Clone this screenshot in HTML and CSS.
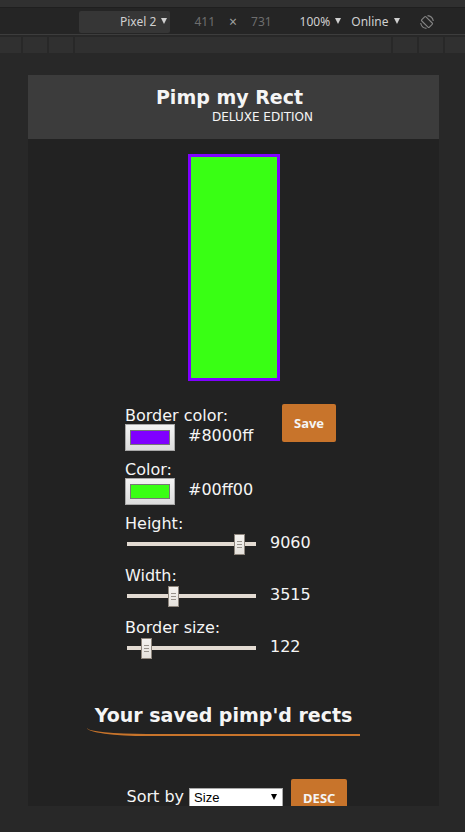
FILE: index.html
```html
<!DOCTYPE html>
<html lang="en">
<head>
<meta charset="utf-8">
<title>Pimp my Rect</title>
<link rel="stylesheet" href="styles.css">
</head>
<body>
<div class="strip"></div>
<nav class="toolbar" aria-label="Device toolbar">
  <button class="device" type="button">Pixel 2 <span class="caret"></span></button>
  <span class="dims"><span>411</span><span class="times">×</span><span>731</span></span>
  <button class="tool zoom" type="button">100% <span class="caret"></span></button>
  <button class="tool" type="button">Online <span class="caret"></span></button>
  <button class="rotate" type="button" aria-label="Rotate">
    <svg width="14" height="14" viewBox="0 0 14 14" fill="none" stroke="currentColor" stroke-width="1.1">
      <path d="M1.8 4.6 4.6 1.8a1 1 0 0 1 1.4 0L12.2 8a1 1 0 0 1 0 1.4L9.4 12.2a1 1 0 0 1-1.4 0L1.8 6a1 1 0 0 1 0-1.4Z"/>
      <path d="M.7 8A6.4 6.4 0 0 0 6.5 13.4M13.3 6A6.4 6.4 0 0 0 7.5 .6"/>
    </svg>
  </button>
</nav>
<div class="ruler"><i></i><i></i><i></i><i class="wide"></i><i></i><i></i><i></i></div>
<main class="screen">
  <header class="banner">
    <h1>Pimp my Rect</h1>
    <p>DELUXE EDITION</p>
  </header>
  <div class="rect"></div>
  <form class="editor">
    <div class="fields">
      <div class="field">
        <label for="border-color">Border color:</label>
        <div class="pick"><input id="border-color" type="color" value="#8000ff"><output>#8000ff</output></div>
      </div>
      <div class="field">
        <label for="color">Color:</label>
        <div class="pick"><input id="color" type="color" value="#39ff14"><output>#00ff00</output></div>
      </div>
      <div class="field">
        <label for="height">Height:</label>
        <div class="slide"><input id="height" type="range" min="0" max="10000" value="9060"><output>9060</output></div>
      </div>
      <div class="field">
        <label for="width">Width:</label>
        <div class="slide"><input id="width" type="range" min="0" max="10000" value="3515"><output>3515</output></div>
      </div>
      <div class="field">
        <label for="border-size">Border size:</label>
        <div class="slide"><input id="border-size" type="range" min="0" max="1000" value="122"><output>122</output></div>
      </div>
    </div>
    <button class="button" type="button">Save</button>
  </form>
  <section class="saved">
    <h2>Your saved pimp'd rects</h2>
    <div class="sort">
      <label for="sort">Sort by</label>
      <span class="select"><select id="sort"><option>Size</option></select><span class="caret"></span></span>
      <button class="button" type="button">DESC</button>
    </div>
  </section>
</main>
</body>
</html>
```
FILE: styles.css
```css
* { box-sizing: border-box; }

body {
  margin: 0;
  height: 100vh;
  display: flex;
  flex-direction: column;
  overflow: hidden;
  background: #282828;
  color: #f5f5f5;
  font: 16px/20px "DejaVu Sans", sans-serif;
}

h1, h2, p { margin: 0; }

button { border: 0; margin: 0; padding: 0; background: none; color: inherit; font: inherit; }

.strip { flex: none; height: 8px; background: #303030; border-bottom: 1px solid #1f1f1f; }

.toolbar {
  flex: none;
  height: 27px;
  display: flex;
  align-items: center;
  justify-content: center;
  padding: 1px 0 0 48px;
  background: #252525;
  border-bottom: 1px solid #3d3d3d;
  color: #d0d0d0;
  font: 12px/16px "Noto Sans", sans-serif;
}

.device {
  width: 91px;
  height: 22px;
  padding-right: 3px;
  border-radius: 2px;
  background: #363636;
  text-align: right;
}

.caret {
  display: inline-block;
  margin-left: 2px;
  border: solid transparent;
  border-width: 6px 3px 0;
  border-top-color: currentColor;
  vertical-align: 2px;
}

.dims { display: flex; gap: 14px; margin: 0 28px 0 24px; color: #6e6e6e; }
.times { color: #a0a0a0; font-size: 14px; }
.zoom { margin-right: 10px; }
.rotate { display: flex; margin-left: 20px; color: #858585; }

.ruler { flex: none; height: 16px; margin: 2px 0 22px; display: flex; gap: 2px; }
.ruler i { flex: 0 0 24px; background: #303030; }
.ruler i:first-child { flex-basis: 21px; }
.ruler i:last-child { flex-basis: 20px; }
.ruler .wide { flex: 1; }

.screen {
  flex: 1;
  min-height: 0;
  margin: 0 26px 26px 28px;
  overflow: hidden;
  background: #222;
}

.banner { height: 64px; padding-top: 10px; background: #3c3c3c; text-align: center; }
h1, h2 { font-size: 19px; line-height: 24px; }
h1 { padding-right: 8px; }
.banner p { padding-left: 58px; font-size: 12px; line-height: 16px; }

.rect {
  width: 92px;
  height: 227px;
  margin: 15px auto 23px;
  border: 3px solid #8000ff;
  background: #39ff14;
}

.editor { display: flex; width: 217px; margin: 0 auto; }
.fields { width: 157px; display: grid; gap: 7px; }
.field label { display: block; height: 20px; line-height: 23px; white-space: nowrap; }
.pick, .slide { display: flex; }
.pick { height: 27px; gap: 13px; line-height: 23px; }
.slide { height: 25px; gap: 14px; line-height: 22px; }

input[type="color"] {
  appearance: none;
  flex: none;
  width: 50px;
  height: 27px;
  margin: 0;
  padding: 5px 4px;
  border: 1px solid #a9a9a9;
  background: linear-gradient(#f4f4f4, #dcdcdc);
}
input[type="color"]::-webkit-color-swatch-wrapper { padding: 0; }
input[type="color"]::-webkit-color-swatch { border: 1px solid #777; border-radius: 0; }

input[type="range"] {
  appearance: none;
  flex: none;
  width: 129px;
  height: 24px;
  margin: 0 0 0 2px;
  background: none;
}
input[type="range"]::-webkit-slider-runnable-track { height: 4px; background: #e3dbd2; }
input[type="range"]::-webkit-slider-thumb {
  appearance: none;
  width: 11px;
  height: 21px;
  margin-top: -8px;
  border: 1px solid #8e867d;
  background:
    linear-gradient(#98928b, #98928b) 50% 6px / 5px 1px no-repeat,
    linear-gradient(#98928b, #98928b) 50% 9px / 5px 1px no-repeat,
    linear-gradient(#98928b, #98928b) 50% 12px / 5px 1px no-repeat,
    linear-gradient(#f5f3f0, #e5e1dc);
}

.button {
  height: 38px;
  padding: 0 12px;
  border-radius: 2px;
  background: #c8742b;
  font: bold 13px/36px "Noto Sans", sans-serif;
}

.saved { display: flex; flex-direction: column; align-items: center; padding-top: 42px; }
h2 {
  margin-right: 20px;
  padding: 0 8px 7px;
  border-bottom: 2px solid #c8742b;
  border-bottom-left-radius: 60px 8px;
}
.sort { display: flex; align-items: flex-start; margin: 43px 0 0 7px; line-height: 36px; }
.select { position: relative; margin: 9px 8px 0 5px; line-height: 20px; }
select {
  appearance: none;
  display: block;
  width: 94px;
  height: 20px;
  padding: 0 4px;
  border: 1px solid #a9a9a9;
  border-radius: 0;
  background: #fff;
  color: #000;
  font: 13px/18px "Liberation Sans", sans-serif;
}
.select .caret { position: absolute; top: 6px; right: 6px; color: #000; pointer-events: none; }
```
